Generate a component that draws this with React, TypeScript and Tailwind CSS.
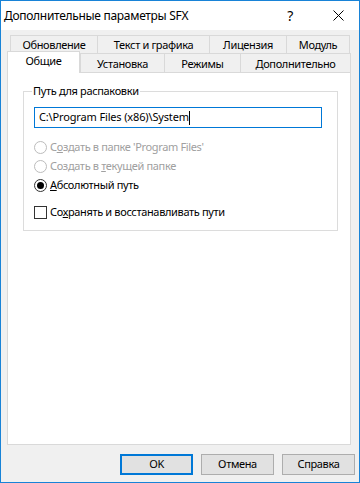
import type { ReactNode } from 'react';

// ==----------------------------------------------------------------------------
// Dialog "Дополнительные параметры SFX"
// ==----------------------------------------------------------------------------

const FONT = "font-['Noto_Sans','DejaVu_Sans',sans-serif]";

export default function App() {
  return (
    <div className={`${FONT} w-[360px] h-[483px] border border-[#1883d7] flex flex-col text-[11px] tracking-[-0.35px] text-black bg-[#f0f0f0]`}>
      {/* Title bar */}
      <div className="h-[29px] bg-white flex items-center justify-between pl-[3px]">
        <span className="text-[12px] tracking-[-0.3px] leading-none">Дополнительные параметры SFX</span>
        <div className="flex items-center h-full">
          <span className="w-[46px] text-center text-[14px] leading-none">?</span>
          <div className="w-[46px] flex items-center justify-center pl-[4px]">
            <svg width="11" height="11" viewBox="0 0 11 11">
              <path d="M0.5 0.5 L10.5 10.5 M10.5 0.5 L0.5 10.5" stroke="#000" strokeWidth="1" />
            </svg>
          </div>
        </div>
      </div>

      {/* Client area */}
      <div className="flex-1 flex flex-col pt-[5px] px-[6px]">
        {/* Tabs: upper row */}
        <div className="flex h-[18px] ml-[3px]">
          <Tab w="w-[88px]">Обновление</Tab>
          <Tab w="w-[113px]">Текст и графика</Tab>
          <Tab w="w-[78px]">Лицензия</Tab>
          <Tab w="w-[64px]">Модуль</Tab>
        </div>
        {/* Tabs: lower row */}
        <div className="flex h-[19px] items-end">
          <div className="w-[73px] h-[22px] -mb-px relative z-10 bg-white border border-b-0 border-[#d9d9d9] flex items-center justify-center pb-[3px]">
            Общие
          </div>
          <Tab w="w-[85px]">Установка</Tab>
          <Tab w="w-[77px]">Режимы</Tab>
          <Tab w="w-[111px]">Дополнительно</Tab>
        </div>

        {/* Tab page */}
        <div className="h-[373px] w-[344px] bg-white border border-[#d9d9d9] pt-[11px] px-[15px]">
          <fieldset className="w-[315px] h-[147px] border border-[#dcdcdc] px-[10px] pt-0 m-0">
            <legend className="ml-[-2px] px-[1px] leading-[14px]">Путь для распаковки</legend>
            <div className="mt-[9px] h-[21px] w-[288px] border border-[#0078d7] flex items-center pl-[4px] tracking-[-0.15px]">
              <span>C:\Program Files (x86)\System</span>
              <span className="w-px h-[14px] bg-black" />
            </div>

            <div className="flex flex-col mt-[13px] gap-[6px]">
              <Radio disabled>
                С<u>о</u>здать в папке 'Program Files'
              </Radio>
              <Radio disabled>
                Создать в <u>т</u>екущей папке
              </Radio>
              <Radio checked>
                <u>А</u>бсолютный путь
              </Radio>
            </div>

            <div className="flex items-center mt-[14px] h-[13px]">
              <div className="w-[13px] h-[13px] border border-[#333] bg-white" />
              <span className="ml-[3px]">
                Со<u>х</u>ранять и восстанавливать пути
              </span>
            </div>
          </fieldset>
        </div>

        {/* Buttons */}
        <div className="flex justify-end gap-[8px] mt-[9px] mr-[-2px]">
          <Button primary>OK</Button>
          <Button>Отмена</Button>
          <Button>Справка</Button>
        </div>
      </div>
    </div>
  );
}

// ==----------------------------------------------------------------------------
// Composants enfants
// ==----------------------------------------------------------------------------

function Tab({ w, children }: { w: string; children: ReactNode }) {
  return (
    <div className={`${w} h-full -mr-px border border-b-0 border-[#d9d9d9] bg-[#f0f0f0] flex items-center justify-center leading-none`}>
      {children}
    </div>
  );
}

function Radio({ children, checked, disabled }: { children: ReactNode; checked?: boolean; disabled?: boolean }) {
  return (
    <div className={`flex items-center h-[13px] ${disabled ? 'text-[#a0a0a0]' : 'text-black'}`}>
      <div
        className={`w-[13px] h-[13px] rounded-full border bg-white flex items-center justify-center ${
          disabled ? 'border-[#bcbcbc]' : 'border-[#333]'
        }`}
      >
        {checked && <div className="w-[7px] h-[7px] rounded-full bg-black" />}
      </div>
      <span className="ml-[3px]">{children}</span>
    </div>
  );
}

function Button({ children, primary }: { children: ReactNode; primary?: boolean }) {
  return (
    <div
      className={`w-[73px] h-[21px] bg-[#e1e1e1] flex items-center justify-center ${
        primary ? 'border-2 border-[#0078d7]' : 'border border-[#adadad]'
      }`}
    >
      {children}
    </div>
  );
}
